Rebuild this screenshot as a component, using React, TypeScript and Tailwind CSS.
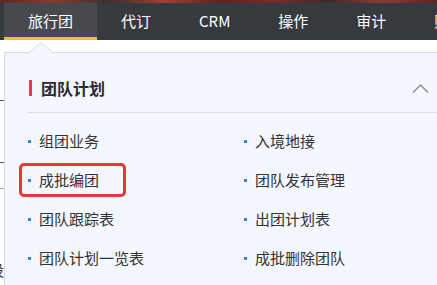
import type React from "react";

const tabs = ["旅行团", "代订", "CRM", "操作", "审计", "财务"];

const items: [string, string][] = [
	["组团业务", "入境地接"],
	["成批编团", "团队发布管理"],
	["团队跟踪表", "出团计划表"],
	["团队计划一览表", "成批删除团队"],
];

const MenuItem: React.FC<{ label: string }> = ({ label }) => (
	<div className="flex items-center h-[39px]">
		<span className="w-[3px] h-[3px] bg-[#3b7fd1] mr-[8px]" />
		<span className="text-[15px] text-[#333]">{label}</span>
	</div>
);

export default function App() {
	return (
		<div
			className="relative w-[437px] h-[285px] overflow-hidden bg-white"
			style={{ fontFamily: '"Microsoft YaHei", "Noto Sans CJK SC", "Noto Sans", sans-serif' }}
		>
			{/* banner strip */}
			<div className="h-[3px] bg-[linear-gradient(90deg,#5a2a26,#8a3b2e,#3a3030,#a04030,#5b2420,#7a2a28,#3c2c2c,#8b3a33,#5a2525)]" />

			{/* top nav */}
			<nav className="flex h-[37px] bg-[#36393e]">
				{tabs.map((t, i) => (
					<div
						key={t}
						className={
							i === 0
								? "flex shrink-0 items-center px-6 ml-[4px] bg-[#47494c] border-b-[3px] border-[#efbf33] text-[15px] text-white whitespace-nowrap"
								: "flex shrink-0 items-center px-6 text-[15px] text-white whitespace-nowrap"
						}
					>
						<span className={i === 0 ? "mt-[3px]" : ""}>{t}</span>
					</div>
				))}
			</nav>

			{/* page content behind the menu */}
			<div className="absolute left-0 top-[100px] w-[4px] h-px bg-[#555]" />
			<div className="absolute left-0 top-[162px] w-[5px] h-px bg-[#555]" />
			<div className="absolute left-0 top-[188px] w-[5px] h-px bg-[#aaa]" />
			<div className="absolute left-[-11px] top-[259px] text-[15px] text-[#333]">设</div>

			{/* dropdown */}
			<div className="absolute left-[4px] top-[52px] w-[445px] h-[260px] bg-[#f4f7fd] border border-[#d5dce8]">
				<svg
					className="absolute left-[23px] top-[-11px]"
					width="26"
					height="12"
					viewBox="0 0 26 12"
				>
					<path d="M0 11.5 L13 0.5 L26 11.5" fill="#f4f7fd" stroke="#d5dce8" strokeWidth="1" />
					<rect x="1" y="11" width="24" height="2" fill="#f4f7fd" />
				</svg>

				<div className="flex items-center h-[16px] mt-[27px] pl-[24px] pr-[13px]">
					<span className="w-[3px] h-[16px] bg-[#d7404f]" />
					<span className="ml-[9px] text-[16px] font-bold text-[#2b2b36]">团队计划</span>
					<svg className="ml-auto mr-[6px]" width="17" height="9" viewBox="0 0 17 9">
						<path d="M1 8.5 L8.5 1 L16 8.5" fill="none" stroke="#808080" strokeWidth="1.2" />
					</svg>
				</div>

				<div className="h-px bg-[#d9dfe9] ml-[22px] mr-[11px] mt-[16px]" />

				<div className="grid grid-cols-[216px_1fr] mt-[9px] pl-[23px]">
					{items.map(([a, b]) => (
						<div key={a} className="contents">
							<MenuItem label={a} />
							<MenuItem label={b} />
						</div>
					))}
				</div>
			</div>

			{/* highlight annotation */}
			<div className="absolute left-[19px] top-[163px] w-[107px] h-[34px] border-[3px] border-[#e5363a] rounded-[5px]" />
		</div>
	);
}
